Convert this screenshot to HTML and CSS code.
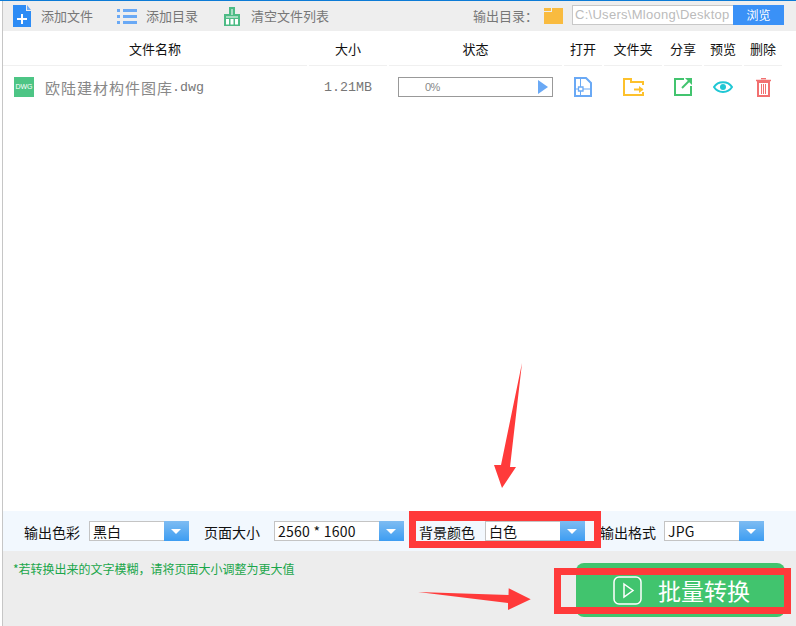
FILE: index.html
```html
<!DOCTYPE html>
<html lang="zh">
<head>
<meta charset="utf-8">
<title>批量转换</title>
<link rel="stylesheet" href="styles.css">
</head>
<body>
<div class="app">
  <div class="topline"></div>
  <div class="shell">
  <header class="toolbar">
    <div class="tool tool-add">
      <svg class="ic" width="18" height="22" viewBox="0 0 18 22"><path d="M0 0H13V6H18V22H0Z" fill="#2d8cf5"/><path d="M14 0L18 5H14Z" fill="#6aa9f5"/><path d="M8 9H10V13H14V15H10V19H8V15H4V13H8Z" fill="#fff"/></svg>
      <span>添加文件</span>
    </div>
    <div class="tool tool-dir">
      <svg class="ic" width="20" height="15" viewBox="0 0 20 15"><path d="M0 0H3V3H0ZM6 0H20V3H6ZM0 6H3V9H0ZM6 6H20V9H6ZM0 12H3V15H0ZM6 12H20V15H6Z" fill="#6aa9f5"/></svg>
      <span>添加目录</span>
    </div>
    <div class="tool tool-clear">
      <svg class="ic" width="18" height="19" viewBox="0 0 18 19"><path d="M6 0H12V7H17V19H1V7H6Z" fill="#4dbb85"/><path d="M8.500 2H9.500V8H8.500ZM3 9.500H15V10.500H3Z" fill="#fff"/><path d="M3 12H6V17.500H3ZM7.500 12H10.500V17.500H7.500ZM12 12H15V17.500H12Z" fill="#fff"/></svg>
      <span>清空文件列表</span>
    </div>
    <div class="output">
      <span class="output-label">输出目录：</span>
      <svg class="folder" width="19" height="16" viewBox="0 0 19 16"><path d="M0 0H7V3H0ZM8 0H19V16H0V4H8Z" fill="#f9bb3f"/></svg>
      <div class="path"><span class="path-text">C:\Users\Mloong\Desktop</span><span class="browse">浏览</span></div>
    </div>
  </header>

  <div class="head">
    <div class="hc c-name">文件名称</div>
    <div class="hc c-size">大小</div>
    <div class="hc c-state">状态</div>
    <div class="hc c-open">打开</div>
    <div class="hc c-dir">文件夹</div>
    <div class="hc c-share">分享</div>
    <div class="hc c-view">预览</div>
    <div class="hc c-del">删除</div>
  </div>

  <div class="list">
    <div class="row">
      <div class="c-name file">
        <span class="dwg">DWG</span>
        <span class="fname"><span class="fname-cjk">欧陆建材构件图库</span><span class="fname-ext">.dwg</span></span>
      </div>
      <div class="c-size fsize">1.21MB</div>
      <div class="c-state">
        <div class="progress"><span class="pct">0%</span><i class="play"></i></div>
      </div>
      <div class="c-open ci">
        <svg width="18" height="20" viewBox="0 0 18 20" fill="none"><path d="M1 1H12L17 6V19H1Z" stroke="#6aa9f5" stroke-width="2"/><path d="M6.500 1V19M1 12H17" stroke="#6aa9f5" stroke-width="1"/><path d="M4.500 10H9V14H4.500Z" fill="#fff" stroke="#6aa9f5" stroke-width="1.300"/></svg>
      </div>
      <div class="c-dir ci">
        <svg width="21" height="18" viewBox="0 0 21 18" fill="none"><path d="M20 7V4H8V1H1V17H20V14" stroke="#fdc12c" stroke-width="2"/><path d="M11 11.500H19.500" stroke="#fdc12c" stroke-width="2"/><path d="M16 8L20.500 11.500L16 15Z" fill="#fdc12c"/></svg>
      </div>
      <div class="c-share ci">
        <svg width="18" height="18" viewBox="0 0 18 18" fill="none"><path d="M10 1H1V17H17V8" stroke="#43c46f" stroke-width="2"/><path d="M8 10L15 3" stroke="#43c46f" stroke-width="2"/><path d="M11 0H18V7Z" fill="#43c46f"/></svg>
      </div>
      <div class="c-view ci">
        <svg width="20" height="14" viewBox="0 0 20 14" fill="none"><path d="M1 7C5 0.500 15 0.500 19 7C15 13.500 5 13.500 1 7Z" stroke="#1fc7d4" stroke-width="2"/><circle cx="10" cy="7" r="3" fill="#1fc7d4"/></svg>
      </div>
      <div class="c-del ci">
        <svg width="15" height="19" viewBox="0 0 15 19" fill="none"><path d="M0 2.500H15M5 .500H10" stroke="#f27070" stroke-width="1.500"/><path d="M2 4H13V18H2Z" stroke="#f27070" stroke-width="2"/><path d="M5.500 6V16M7.500 6V16M9.500 6V16" stroke="#f27070"/></svg>
      </div>
    </div>
  </div>

  <div class="options">
    <span class="opt-label l1">输出色彩</span>
    <div class="select s1"><span>黑白</span><i class="arrow"></i></div>
    <span class="opt-label l2">页面大小</span>
    <div class="select s2"><span class="num">2560 * 1600</span><i class="arrow"></i></div>
    <span class="opt-label l3">背景颜色</span>
    <div class="select s3"><span>白色</span><i class="arrow"></i></div>
    <span class="opt-label l4">输出格式</span>
    <div class="select s4"><span class="num">JPG</span><i class="arrow"></i></div>
  </div>

  <footer class="bottom">
    <p class="hint">*若转换出来的文字模糊，请将页面大小调整为更大值</p>
    <button class="convert">
      <svg width="29" height="29" viewBox="0 0 29 29" fill="none"><rect x="1" y="1" width="27" height="27" rx="5" stroke="#fff" stroke-width="1.500"/><path d="M11 8L20 14.500L11 21Z" stroke="#fff" stroke-width="1.500"/></svg>
      <span>批量转换</span>
    </button>
  </footer>
  </div>

  <div class="box box-bg"></div>
  <div class="box box-btn"></div>
  <svg class="annot" width="796" height="626" viewBox="0 0 796 626"><path d="M522 363L510 467L516 467L502 488L494 465L501 465Z" fill="#ff3a3a"/><path d="M418 592L508.500 595L508.700 588.300L530.700 599.300L508 610L508 603Z" fill="#ff3a3a"/></svg>
</div>
</body>
</html>
```
FILE: styles.css
```css
* { box-sizing: border-box; margin: 0; padding: 0; }
html, body { width: 796px; height: 626px; overflow: hidden; background: #fff; }
body { font-family: "Noto Sans CJK SC", "Liberation Sans", sans-serif; }
.app { position: relative; width: 796px; height: 626px; display: flex; flex-direction: column; }
.topline { height: 1px; background: #0c7bd6; flex: none; }
.shell { flex: 1; min-height: 0; margin-left: 2px; border-left: 1px solid #c6c6c6; display: flex; flex-direction: column; }
.toolbar { height: 30px; background: #eee; display: flex; align-items: center; color: #777; font-size: 13px; flex: none; }
.tool { display: flex; align-items: center; }
.tool span { margin-bottom: 2px; }
.tool-add { margin-left: 10px; gap: 10px; }
.tool-dir { margin-left: 24px; gap: 9px; }
.tool-clear { margin-left: 25px; gap: 10px; }
.output { margin-left: auto; display: flex; align-items: center; }
.output-label { color: #777; margin-bottom: 1px; }
.folder { margin-left: 6px; }
.path { margin-left: 9px; margin-right: 12px; margin-bottom: 2px; width: 212px; height: 20px; display: flex; border: 1px solid #c8c8c8; background: #fff; }
.path-text { flex: 1; font: 13px/18px "Liberation Sans", sans-serif; color: #bbb; padding-left: 2px; letter-spacing: .28px; white-space: nowrap; overflow: hidden; }
.browse { width: 51px; margin: -1px -1px -1px 0; background: #3a91f7; color: #fff; font-size: 12px; text-align: center; line-height: 20px; }
.head { display: flex; height: 35px; flex: none; font-size: 13px; color: #111; }
.hc { text-align: center; line-height: 35px; border-bottom: 1px solid #f0f0f0; }
.c-name { width: 304px; margin-right: 2px; }
.c-size { width: 78px; margin-right: 2px; }
.c-state { width: 173px; margin-right: 2px; }
.c-open { width: 38px; margin-right: 2px; }
.c-dir { width: 58px; margin-right: 2px; }
.c-share { width: 38px; margin-right: 2px; }
.c-view { width: 38px; margin-right: 2px; }
.c-del { width: 38px; }
.list { flex: 1; }
.row { display: flex; align-items: center; height: 42px; }
.file { display: flex; align-items: center; }
.dwg { margin-left: 11px; width: 20px; height: 20px; background: #4dc585; color: #fff; font: 7px/20px "Liberation Sans", sans-serif; text-align: center; }
.fname { margin-left: 11px; color: #888; white-space: nowrap; display: flex; align-items: center; }
.fname-cjk { font: 15px "Noto Sans CJK SC", sans-serif; letter-spacing: 1px; }
.fname-ext { font: 13.330px "Liberation Mono", monospace; color: #777; margin-left: -1px; }
.fsize { font: 13.330px "Liberation Mono", monospace; color: #777; text-align: center; }
.progress { position: relative; width: 155px; margin-left: 9px; height: 20px; border: 1px solid #999; display: flex; align-items: center; }
.pct { margin-left: 26px; font: 11px "Liberation Sans", sans-serif; letter-spacing: -.5px; color: #888; }
.play { position: absolute; right: 4px; top: 2px; width: 0; height: 0; border-left: 10px solid #6aa9f5; border-top: 7px solid transparent; border-bottom: 7px solid transparent; }
.ci { display: flex; justify-content: center; align-items: center; }
.options { height: 40px; background: #f2f8fe; flex: none; display: flex; align-items: flex-start; font-size: 14px; color: #111; padding-top: 10px; }
.opt-label { line-height: 23px; white-space: nowrap; }
.l1 { margin-left: 21px; }
.l2 { margin-left: 15px; }
.l3 { margin-left: 15px; }
.l4 { margin-left: 15px; }
.select { width: 100px; height: 20px; display: flex; border: 1px solid #c4c4c4; background: #fff; }
.select span { flex: 1; font: 14px/18px "Noto Sans CJK SC", "Liberation Sans", sans-serif; padding-left: 3px; color: #111; white-space: nowrap; overflow: hidden; }
.select .num { letter-spacing: .25px; }
.s1 { margin-left: 9px; }
.s2 { width: 130px; margin-left: 14px; }
.s3 { margin-left: 10px; }
.s4 { margin-left: 8px; }
.arrow { position: relative; width: 25px; margin: -1px -1px -1px 0; background: linear-gradient(#7ebcf2, #3d9df2); flex: none; }
.arrow::after { content: ""; position: absolute; left: 7px; top: 8px; border-top: 5px solid #fff; border-left: 5.500px solid transparent; border-right: 5.500px solid transparent; }
.bottom { height: 75px; flex: none; background: #ededed; position: relative; }
.hint { font-size: 12px; color: #1aa64a; padding: 10px 0 0 10px; line-height: 16px; white-space: nowrap; }
.convert { position: absolute; left: 573px; top: 12px; width: 209px; height: 54px; border: 0; border-radius: 8px; background: #41c46e; color: #fff; display: flex; align-items: center; gap: 16px; padding-left: 37px; font: 23px "Noto Sans CJK SC", sans-serif; }
.box { position: absolute; border: 7px solid #ff3a3a; pointer-events: none; }
.box-bg { left: 409px; top: 511px; width: 192px; height: 37px; border-top-width: 10px; }
.box-btn { left: 554px; top: 568px; width: 237px; height: 46px; }
.annot { position: absolute; left: 0; top: 0; pointer-events: none; }
```
